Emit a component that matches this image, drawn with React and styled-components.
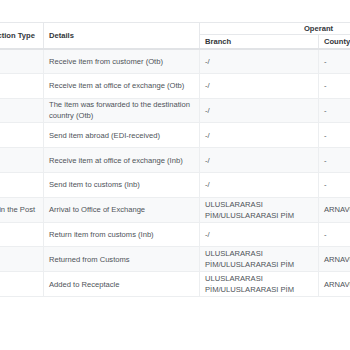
import React from 'react';
import styled, { createGlobalStyle } from 'styled-components';

const GlobalStyle = createGlobalStyle`
  html, body {
    margin: 0;
    padding: 0;
    background: #ffffff;
  }
  body {
    font-family: "Liberation Sans", Arial, sans-serif;
    -webkit-font-smoothing: antialiased;
  }
`;

const rows = [
  { type: '', details: 'Receive item from customer (Otb)', branch: '-/', county: '-' },
  { type: '', details: 'Receive item at office of exchange (Otb)', branch: '-/', county: '-' },
  { type: '', details: 'The item was forwarded to the destination country (Otb)', branch: '-/', county: '-' },
  { type: '', details: 'Send item abroad (EDI-received)', branch: '-/', county: '-' },
  { type: '', details: 'Receive item at office of exchange (Inb)', branch: '-/', county: '-' },
  { type: '', details: 'Send item to customs (Inb)', branch: '-/', county: '-' },
  { type: 'Arrived in the Post', details: 'Arrival to Office of Exchange', branch: 'ULUSLARARASI PİM/ULUSLARARASI PİM', county: 'ARNAVUTKÖY' },
  { type: '', details: 'Return item from customs (Inb)', branch: '-/', county: '-' },
  { type: '', details: 'Returned from Customs', branch: 'ULUSLARARASI PİM/ULUSLARARASI PİM', county: 'ARNAVUTKÖY' },
  { type: '', details: 'Added to Receptacle', branch: 'ULUSLARARASI PİM/ULUSLARARASI PİM', county: 'ARNAVUTKÖY' },
];

const App = () => {
  return (
    <Page>
      <GlobalStyle />
      <TableWrap>
        <Table>
          <colgroup>
            <col style={{ width: 76 }} />
            <col style={{ width: 156 }} />
            <col style={{ width: 119 }} />
            <col style={{ width: 119 }} />
          </colgroup>
          <thead>
            <HeadRow $h={12}>
              <Th rowSpan={2}>Transaction Type</Th>
              <Th rowSpan={2}>Details</Th>
              <Th colSpan={2} $center>Operant</Th>
            </HeadRow>
            <HeadRow $h={14}>
              <Th $bottom>Branch</Th>
              <Th $bottom>County</Th>
            </HeadRow>
          </thead>
          <tbody>
            {rows.map((r, i) => (
              <BodyRow key={i} $striped={i % 2 === 0}>
                <Td>{r.type}</Td>
                <Td>{r.details}</Td>
                <Td>{r.branch}</Td>
                <Td $nowrap>{r.county}</Td>
              </BodyRow>
            ))}
          </tbody>
        </Table>
      </TableWrap>
    </Page>
  );
};

const Page = styled.div`
  width: 350px;
  height: 350px;
  overflow: hidden;
  background: #ffffff;
`;

const TableWrap = styled.div`
  padding-top: 22px;
  overflow: hidden;
`;

const Table = styled.table`
  margin-left: -33px;
  width: 470px;
  table-layout: fixed;
  border-collapse: collapse;
  font-size: 7.6px;
  line-height: 11px;
  color: #4e5359;
`;

const HeadRow = styled.tr`
  height: ${p => p.$h}px;
  background: #ffffff;
`;

const Th = styled.th`
  padding: 0 5px;
  text-align: ${p => (p.$center ? 'center' : 'left')};
  vertical-align: middle;
  font-weight: bold;
  color: #33373b;
  border: 1px solid #e6e8eb;
  border-bottom: ${p => (p.$bottom || !p.$center ? '2px solid #e1e3e6' : '1px solid #e6e8eb')};
  white-space: nowrap;
`;

const BodyRow = styled.tr`
  height: 24.8px;
  background: ${p => (p.$striped ? '#f8f9fa' : '#ffffff')};
`;

const Td = styled.td`
  padding: 0 5px;
  vertical-align: middle;
  border: 1px solid #eceef0;
  overflow: hidden;
  white-space: ${p => (p.$nowrap ? 'nowrap' : 'normal')};
`;

export default App;
